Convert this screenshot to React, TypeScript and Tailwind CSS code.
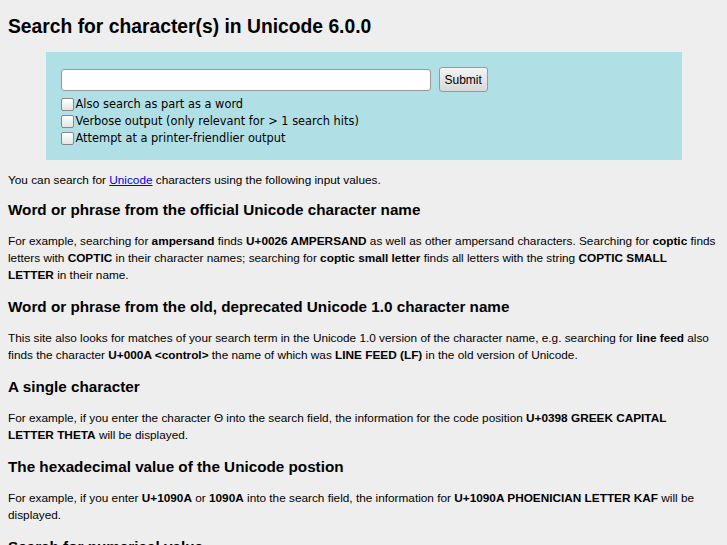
import React from "react";

const L = { fontFamily: '"Liberation Sans", Arial, sans-serif' };
const D = { fontFamily: '"DejaVu Sans", Verdana, sans-serif' };

const P = ({ children, first }: { children: React.ReactNode; first?: boolean }) => (
  <p className={(first ? "mt-[12px]" : "mt-[13px]") + " text-[11.8px] leading-[17px]"}>{children}</p>
);
const H = ({ children, first }: { children: React.ReactNode; first?: boolean }) => (
  <h2 className={(first ? "mt-[11px]" : "mt-[13px]") + " text-[15.25px] font-bold leading-[20px]"}>{children}</h2>
);

export default function App() {
  return (
    <div className="min-h-[545px] bg-[#eeeeee] px-2 pt-[15px] text-black" style={L}>
      <h1 className="text-[19.3px] font-bold leading-[24px]">Search for character(s) in Unicode 6.0.0</h1>
      <div className="mx-auto mt-[13px] w-[636px] bg-[#b0e0e6] px-[15px] pt-[15px] pb-[13px]">
        <div className="flex items-center gap-2">
          <input className="h-[22px] w-[370px] rounded-[3px] border border-[#999] bg-white" />
          <button className="h-[25px] rounded-[3px] border border-[#999] bg-gradient-to-b from-[#f4f4f4] to-[#d8d8d8] px-[5px] text-[12px]" style={L}>Submit</button>
        </div>
        <div className="mt-[4px] text-[11.4px] leading-[17px]" style={D}>
          {["Also search as part as a word", "Verbose output (only relevant for > 1 search hits)", "Attempt at a printer-friendlier output"].map((t) => (
            <label key={t} className="flex items-center gap-[2px]">
              <span className="inline-block h-[13px] w-[13px] rounded-[2px] border border-[#888] bg-gradient-to-b from-white to-[#e4e4e4]" />
              <span>{t}</span>
            </label>
          ))}
        </div>
      </div>
      <P first>
        You can search for <a className="text-[#0000ee] underline">Unicode</a> characters using the following input values.
      </P>
      <H first>Word or phrase from the official Unicode character name</H>
      <P>
        For example, searching for <b>ampersand</b> finds <b>U+0026 AMPERSAND</b> as well as other ampersand characters. Searching for <b>coptic</b> finds<br />letters with <b>COPTIC</b> in their character names; searching for <b>coptic small letter</b> finds all letters with the string <b>COPTIC SMALL<br />LETTER</b> in their name.
      </P>
      <H>Word or phrase from the old, deprecated Unicode 1.0 character name</H>
      <P>
        This site also looks for matches of your search term in the Unicode 1.0 version of the character name, e.g. searching for <b>line feed</b> also<br />finds the character <b>U+000A &lt;control&gt;</b> the name of which was <b>LINE FEED (LF)</b> in the old version of Unicode.
      </P>
      <H>A single character</H>
      <P>
        For example, if you enter the character Θ into the search field, the information for the code position <b>U+0398 GREEK CAPITAL<br />LETTER THETA</b> will be displayed.
      </P>
      <H>The hexadecimal value of the Unicode postion</H>
      <P>
        For example, if you enter <b>U+1090A</b> or <b>1090A</b> into the search field, the information for <b>U+1090A PHOENICIAN LETTER KAF</b> will be<br />displayed.
      </P>
      <H>Search for numerical value</H>
    </div>
  );
}
